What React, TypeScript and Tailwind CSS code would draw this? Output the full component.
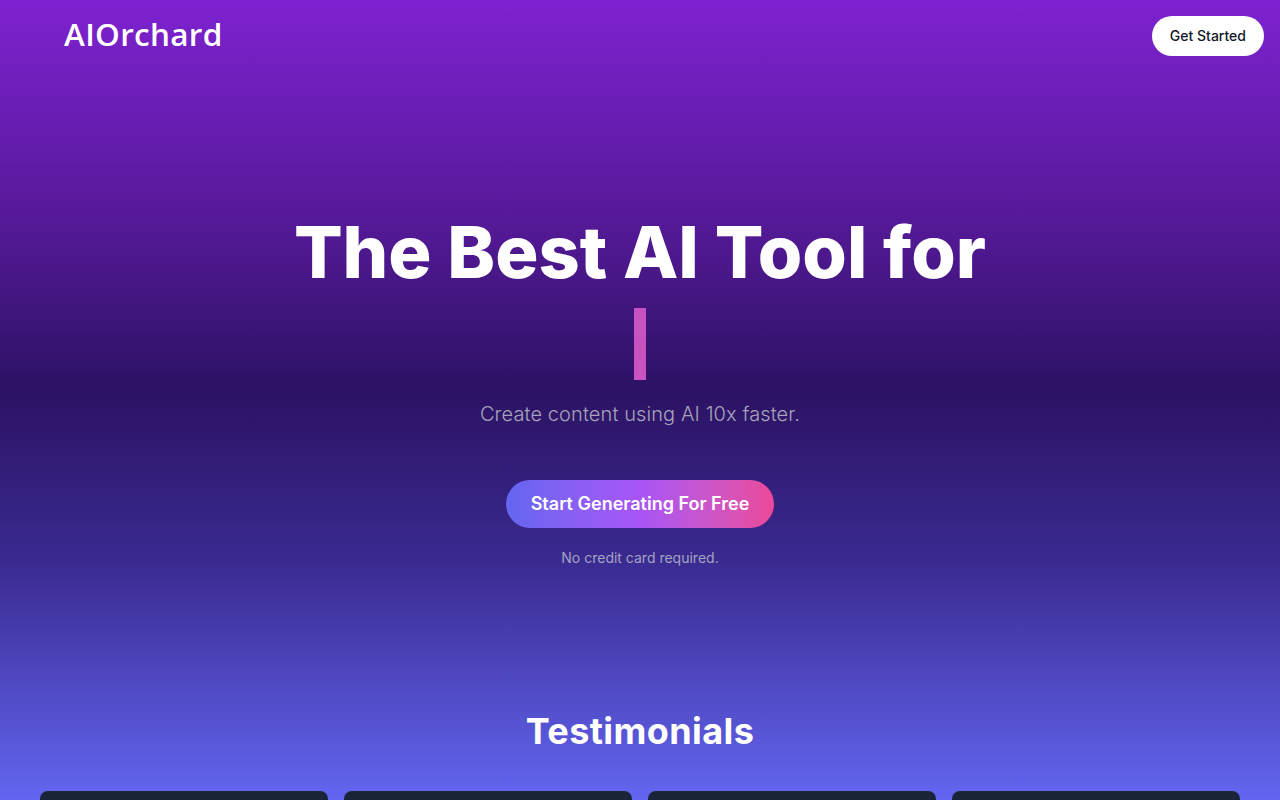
import React from "react";

export default function App() {
  return (
    <div
      className="min-h-screen w-full overflow-hidden bg-[linear-gradient(to_bottom,#7e22d0_0px,#5a1a9e_200px,#2c1264_390px,#3a2a90_560px,#6366f1_800px)] font-['Inter',sans-serif] text-white"
    >
      <nav className="flex items-center justify-between pl-16 pr-4 pt-4">
        <div className="-mt-1 font-['Open_Sans',sans-serif] text-[31.5px] font-semibold leading-[40px] tracking-[0.3px] text-white">
          AIOrchard
        </div>
        <button className="h-10 rounded-full bg-white px-[18px] text-sm font-medium text-gray-900">
          Get Started
        </button>
      </nav>

      <section className="flex flex-col items-center pt-[160px]">
        <h1 className="text-center text-[72px] font-extrabold leading-[72px] tracking-[0px] text-white">
          The Best AI Tool for
        </h1>
        <div className="mt-5 h-[72px] w-3 bg-[#c852bf]" />
        <p className="mt-5 text-xl font-light tracking-[0.1px] text-[#a7a3b8]">
          Create content using AI 10x faster.
        </p>
        <button className="mt-[52px] h-12 rounded-full bg-gradient-to-r from-[#6366f1] via-[#a855f7] to-[#ec4899] px-[25px] text-lg font-semibold text-white">
          Start Generating For Free
        </button>
        <p className="mt-5 text-sm text-[#a3a3c2]">No credit card required.</p>
      </section>

      <section className="pt-[143px]">
        <h2 className="text-center text-4xl font-bold leading-[40px] tracking-[0.4px] text-white">
          Testimonials
        </h2>
        <div className="mt-10 grid grid-cols-4 gap-4 px-10">
          {[0, 1, 2, 3].map((i) => (
            <div key={i} className="h-40 rounded-lg bg-[#1a2437]" />
          ))}
        </div>
      </section>
    </div>
  );
}
